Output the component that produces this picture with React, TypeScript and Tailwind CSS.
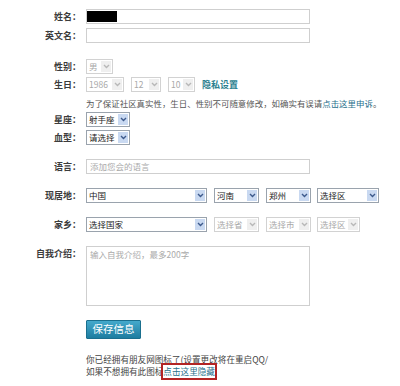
import React from "react";

function Chevron({ color }: { color: string }) {
  return (
    <svg width="7" height="5" viewBox="0 0 7 5">
      <path d="M1 1 L3.5 3.5 L6 1" stroke={color} strokeWidth="1.4" fill="none" />
    </svg>
  );
}

function Sel({ w, text, disabled = false }: { w: number; text: string; disabled?: boolean }) {
  return (
    <div
      className={`flex h-[15px] items-stretch border bg-white ${disabled ? "border-[#d2d2d2] text-[#a8a8a8]" : "border-[#9aa3ad] text-[#222]"}`}
      style={{ width: w }}
    >
      <div className="flex flex-1 items-center overflow-hidden whitespace-nowrap pl-[2px] text-[8.5px] leading-none">{text}</div>
      <div
        className={`m-[1px] flex w-[10px] items-center justify-center ${disabled ? "bg-[#efefef]" : "bg-[#c9d9f1]"}`}
      >
        <Chevron color={disabled ? "#b8b8b8" : "#3d5a8c"} />
      </div>
    </div>
  );
}

function Label({ children }: { children: React.ReactNode }) {
  return (
    <div className="w-[82px] shrink-0 pr-[1px] text-right text-[9px] font-bold leading-none text-[#3c3c3c]">
      {children}
    </div>
  );
}

export default function App() {
  return (
    <div
      className="h-[386px] w-[400px] overflow-hidden bg-white"
      style={{ fontFamily: '"Noto Sans CJK SC", "Noto Sans", sans-serif' }}
    >
      <div className="flex flex-col pt-[9px]">
        <div className="flex h-[15px] items-center gap-[4px]">
          <Label>姓名：</Label>
          <div className="flex h-[15px] w-[224px] items-center border border-[#cfcfcf] bg-white">
            <div className="h-[11px] w-[30px] bg-black" />
          </div>
        </div>
        <div className="mt-[4px] flex h-[15px] items-center gap-[4px]">
          <Label>英文名：</Label>
          <div className="h-[15px] w-[224px] border border-[#cfcfcf] bg-white" />
        </div>

        <div className="mt-[16px] flex h-[15px] items-center gap-[4px]">
          <Label>性别：</Label>
          <Sel w={27} text="男" disabled />
        </div>
        <div className="mt-[3px] flex h-[15px] items-center gap-[4px]">
          <Label>生日：</Label>
          <div className="flex items-center">
            <Sel w={38} text="1986" disabled />
            <div className="ml-[7px]"><Sel w={30} text="12" disabled /></div>
            <div className="ml-[7px]"><Sel w={27} text="10" disabled /></div>
            <span className="ml-[7px] text-[9px] font-bold leading-none text-[#2b7f8f]">隐私设置</span>
          </div>
        </div>
        <div className="mt-[6px] pl-[86px] text-[8.45px] leading-[11px] whitespace-nowrap text-[#555]">
          为了保证社区真实性，生日、性别不可随意修改，如确实有误请<span className="text-[#1f6f8b]">点击这里申诉</span>。
        </div>
        <div className="mt-[3px] flex h-[14px] items-center gap-[4px]">
          <Label>星座：</Label>
          <Sel w={44} text="射手座" />
        </div>
        <div className="mt-[4px] flex h-[14px] items-center gap-[4px]">
          <Label>血型：</Label>
          <Sel w={44} text="请选择" />
        </div>

        <div className="mt-[15px] flex h-[15px] items-center gap-[4px]">
          <Label>语言：</Label>
          <div className="flex h-[15px] w-[224px] items-center border border-[#cfcfcf] bg-white pl-[3px] text-[8.5px] leading-none text-[#aaa]">
            添加您会的语言
          </div>
        </div>

        <div className="mt-[14px] flex h-[15px] items-center gap-[4px]">
          <Label>现居地：</Label>
          <div className="flex items-center">
            <Sel w={121} text="中国" />
            <div className="ml-[7px]"><Sel w={45} text="河南" /></div>
            <div className="ml-[7px]"><Sel w={45} text="郑州" /></div>
            <div className="ml-[6px]"><Sel w={62} text="选择区" /></div>
          </div>
        </div>
        <div className="mt-[14px] flex h-[15px] items-center gap-[4px]">
          <Label>家乡：</Label>
          <div className="flex items-center">
            <Sel w={121} text="选择国家" />
            <div className="ml-[7px]"><Sel w={45} text="选择省" disabled /></div>
            <div className="ml-[7px]"><Sel w={45} text="选择市" disabled /></div>
            <div className="ml-[6px]"><Sel w={43} text="选择区" disabled /></div>
          </div>
        </div>

        <div className="mt-[14px] flex items-start gap-[4px]">
          <div className="pt-[3px]"><Label>自我介绍：</Label></div>
          <div className="h-[60px] w-[224px] border border-[#cfcfcf] bg-white px-[3px] pt-[3px] text-[8.5px] leading-none text-[#aaa]">
            输入自我介绍，最多200字
          </div>
        </div>

        <div className="mt-[14px] pl-[86px]">
          <div className="flex h-[19px] w-[55px] items-center justify-center rounded-[1px] border border-[#1a6f8e] bg-gradient-to-b from-[#44a9cc] to-[#1d7da0] text-[10.5px] leading-none text-white">
            保存信息
          </div>
        </div>

        <div className="mt-[15px] whitespace-nowrap pl-[86px] text-[8.6px] leading-[11.5px] text-[#444]">
          你已经拥有朋友网图标了(设置更改将在重启QQ/
        </div>
        <div className="whitespace-nowrap pl-[86px] text-[8.6px] leading-[11.5px] text-[#444]">
          如果不想拥有此图标
          <span className="relative text-[#1f6f8b]">
            点击这里隐藏
            <span className="absolute left-[-2px] right-[-2px] top-[-2px] bottom-[-3px] border-2 border-[#b32424]" />
          </span>
        </div>
      </div>
    </div>
  );
}
